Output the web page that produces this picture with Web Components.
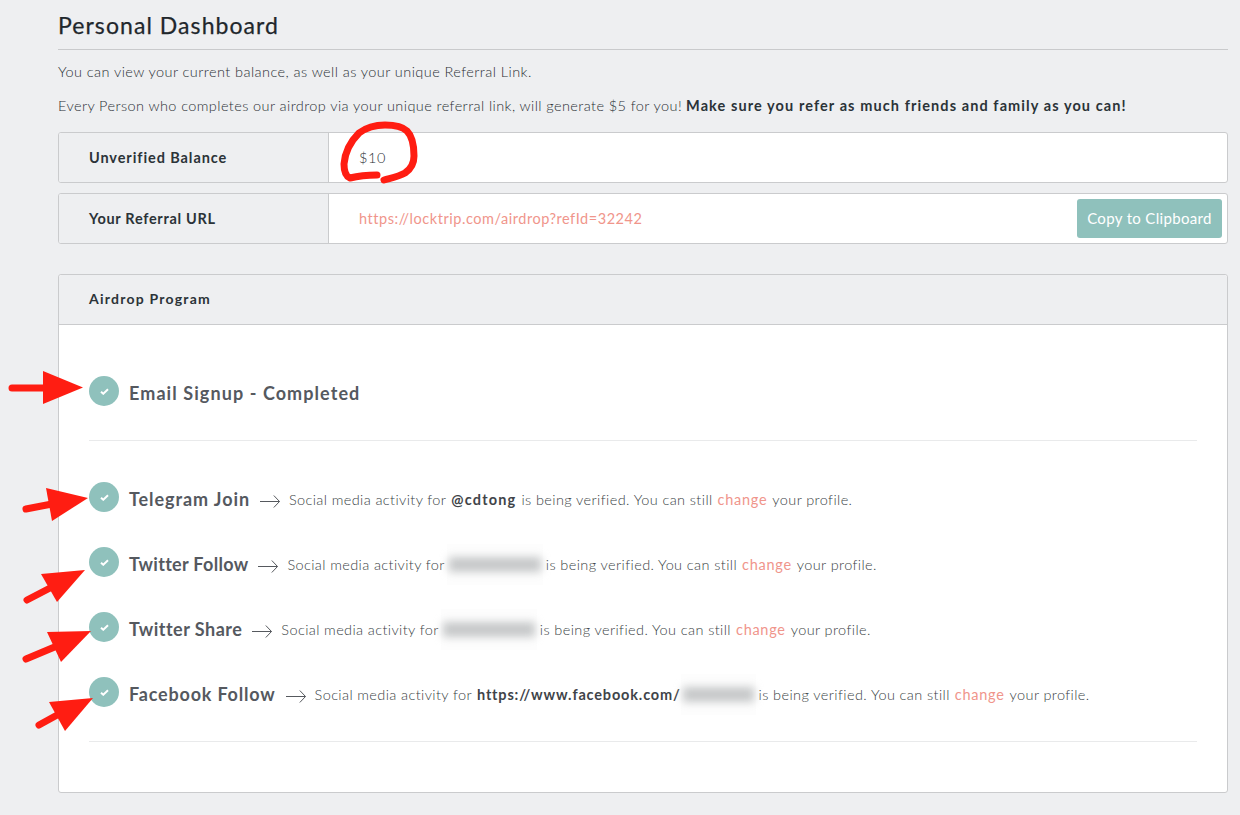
<!doctype html>
<html lang="en"><head><meta charset="utf-8"><title>Personal Dashboard</title>
<style>html,body{margin:0;background:#eeeff1;overflow:hidden}</style></head>
<body>
<dash-page>
  <info-row label="Unverified Balance" label-ls=".915"><span style="font:300 14.5px Lato,sans-serif;letter-spacing:.65px;color:#2b3035">$10</span></info-row>
  <info-row label="Your Referral URL" label-ls=".691" url="https://locktrip.com/airdrop?refId=32242"><copy-button slot="action">Copy to Clipboard</copy-button></info-row>
  <air-panel heading="Airdrop Program">
    <task-row name="Email Signup - Completed" name-ls="1.08"></task-row>
    <hr-line></hr-line>
    <task-row name="Telegram Join" name-ls=".92" handle="@cdtong" handle-ls="1.164"></task-row>
    <task-row name="Twitter Follow" name-ls=".3" blur="96"></task-row>
    <task-row name="Twitter Share" name-ls=".488" blur="96"></task-row>
    <task-row name="Facebook Follow" name-ls=".81" handle="https://www.facebook.com/" handle-ls=".836" blur="75"></task-row>
    <hr-line></hr-line>
  </air-panel>
  <red-marks></red-marks>
</dash-page>
<script>
const el=(html)=>{const t=document.createElement('template');t.innerHTML=html;return t.content.cloneNode(true)};
const esc=s=>String(s||'').replace(/&/g,'&amp;').replace(/</g,'&lt;').replace(/"/g,'&quot;');

class DashPage extends HTMLElement{constructor(){super();this.attachShadow({mode:'open'}).append(el(`
<style>
:host{display:block;position:relative;box-sizing:border-box;width:1240px;height:815px;padding:0 12px 0 58px;font-family:Lato,sans-serif;color:#3f4449}
h1{margin:0;box-sizing:border-box;padding-top:11px;border-bottom:1px solid #c9cacc;height:50px;font:400 23px/28px Lato,sans-serif;letter-spacing:1.07px;color:#1f272c;-webkit-text-stroke:.25px #1f272c}
p{margin:0;font:300 14.5px/20px Lato,sans-serif;color:#2b3035}
.a{margin-top:12px;letter-spacing:.433px}
.b{margin:14px 0 16px;display:flex;gap:4px;letter-spacing:.414px;white-space:nowrap}
.b b{font-weight:700;letter-spacing:1.09px;color:#2b3338}
.rows{display:flex;flex-direction:column;gap:10px}
</style>
<h1>Personal Dashboard</h1>
<p class="a">You can view your current balance, as well as your unique Referral Link.</p>
<p class="b"><span>Every Person who completes our airdrop via your unique referral link, will generate $5 for you!</span><b>Make sure you refer as much friends and family as you can!</b></p>
<div class="rows"><slot></slot></div>`))}}
customElements.define('dash-page',DashPage);

class InfoRow extends HTMLElement{constructor(){super();this.attachShadow({mode:'open'})}
connectedCallback(){const u=this.getAttribute('url');this.shadowRoot.replaceChildren(el(`
<style>
:host{display:flex;box-sizing:border-box;height:51px;background:#fff;border:1px solid #cacbcd;border-radius:3px;overflow:hidden}
.l{flex:none;box-sizing:border-box;width:270px;padding-left:30px;background:#eeeff1;border-right:1px solid #cacbcd;display:flex;align-items:center;font:700 14.5px Lato,sans-serif;letter-spacing:${this.getAttribute('label-ls')}px;color:#2b3338}
.v{flex:1;padding:0 30px;display:flex;align-items:center;font:300 14.5px Lato,sans-serif}
a{color:#f0958b;font-weight:400;letter-spacing:.54px;text-decoration:none}
.act{display:flex;align-items:center;padding-right:5px}
</style>
<div class="l">${esc(this.getAttribute('label'))}</div>
<div class="v">${u?`<a href="#">${esc(u)}</a>`:''}<slot></slot></div>
<div class="act"><slot name="action"></slot></div>`))}}
customElements.define('info-row',InfoRow);

class CopyButton extends HTMLElement{constructor(){super();this.attachShadow({mode:'open'}).append(el(`
<style>:host{display:flex;align-items:center;justify-content:center;box-sizing:border-box;width:145px;height:39px;padding-bottom:2px;border-radius:3px;background:#8fc1bc;color:#fff;font:400 15px Lato,sans-serif;letter-spacing:.333px;white-space:nowrap}</style><slot></slot>`))}}
customElements.define('copy-button',CopyButton);

class AirPanel extends HTMLElement{constructor(){super();this.attachShadow({mode:'open'})}
connectedCallback(){this.shadowRoot.replaceChildren(el(`
<style>
:host{display:block;box-sizing:border-box;margin-top:20px;height:519px;background:#fff;border:1px solid #cacbcd;border-radius:3px}
header{box-sizing:border-box;height:50px;padding:0 0 2px 30px;background:#eeeff1;border-bottom:1px solid #cacbcd;border-radius:3px 3px 0 0;display:flex;align-items:center;font:700 14px Lato,sans-serif;letter-spacing:1.229px;color:#2b3338}
.b{padding:51px 30px 0}
</style>
<header>${esc(this.getAttribute('heading'))}</header>
<div class="b"><slot></slot></div>`))}}
customElements.define('air-panel',AirPanel);

class HrLine extends HTMLElement{constructor(){super();this.attachShadow({mode:'open'}).append(el(`<style>:host{display:block;height:1px;background:#e9eaeb;margin:-1px 0 41px}</style>`))}}
customElements.define('hr-line',HrLine);

class CheckBadge extends HTMLElement{constructor(){super();this.attachShadow({mode:'open'}).append(el(`
<style>:host{display:flex;flex:none;align-items:center;justify-content:center;width:30px;height:30px;border-radius:50%;background:#8fc1bc}svg{display:block}</style>
<svg width="9" height="7" viewBox="0 0 10 8" fill="none" stroke="#fff" stroke-width="2.2"><path d="M1 4.200 3.600 6.600 9 1.400"/></svg>`))}}
customElements.define('check-badge',CheckBadge);

class TaskRow extends HTMLElement{constructor(){super();this.attachShadow({mode:'open'})}
connectedCallback(){const g=k=>this.getAttribute(k);const blur=g('blur');const handle=g('handle');const plain=!blur&&!handle;
this.shadowRoot.replaceChildren(el(`
<style>
:host{display:flex;align-items:flex-start;height:30px;margin-bottom:35px;white-space:nowrap}
.n{margin:2px 0 0 10px;font:700 18px/30px Lato,sans-serif;letter-spacing:${g('name-ls')}px;color:#55595f}
.m{display:flex;align-items:center;gap:5px;margin-top:2px;height:30px;font:300 14.5px Lato,sans-serif;color:#3a3f45}
.s1{letter-spacing:.39px}.s2{letter-spacing:.407px}.s3{letter-spacing:.395px}
.arrow{margin:0 4px 0 10px;position:relative;top:2px}
b{font-weight:700;color:#3f4449;letter-spacing:${g('handle-ls')}px}
a{color:#f0958b;font-weight:400;letter-spacing:.721px;text-decoration:none}
.bl{position:relative;display:block;height:15px;margin:0 -2px 0 ${handle?'-5px':'-3px'}}
.bl:before{content:"";position:absolute;inset:-13px 0;background:#fdfdfd}
.bl i{position:absolute;inset:0 2px;background:#c6c8c9;filter:blur(4px)}
</style>
<check-badge></check-badge>
<span class="n">${esc(g('name'))}</span>
${plain?'':`<div class="m">
<svg class="arrow" width="20" height="14" viewBox="0 0 20 14" fill="none" stroke="#56595e" stroke-width="1"><path d="M0 7.500H19.500M13.800 1.500 19.500 7.500 13.800 13.500"/></svg>
<span class="s1">Social media activity for</span>
${handle?`<b>${esc(handle)}</b>`:''}
${blur?`<span class="bl" style="width:${blur}px"><i></i></span>`:''}
<span class="s2">is being verified. You can still</span>
<a href="#">change</a>
<span class="s3">your profile.</span>
</div>`}`))}}
customElements.define('task-row',TaskRow);

class RedMarks extends HTMLElement{constructor(){super();this.attachShadow({mode:'open'}).append(el(`
<style>:host{position:absolute;left:0;top:0;width:1240px;height:815px;pointer-events:none}svg{display:block}</style>
<svg width="1240" height="815" viewBox="0 0 1240 815">
<g fill="none" stroke="#ff1d12" stroke-linecap="round" stroke-linejoin="round">
<path stroke-width="7" d="M377 175C368 175 358 176 350 178C345 176 344 170 344 164C345 152 351 141 359 133C367 127 376 125 385 125C394 125 402 126 407 131C413 137 414 147 414 156C414 163 411 169 405 173C398 177 391 178 384 180"/>
<path stroke-width="7" d="M12 388H46M26 509 52 504M27 600 52 587M26 659 57 646M39 725 59 714"/>
</g>
<g fill="#ff1d12">
<path d="M43 371 83 387.500 43 404Z"/><path d="M46 488 88 498 52 521Z"/><path d="M41 574 85 570 57 602Z"/><path d="M47 632 91 631 61 662Z"/><path d="M49 702 93 698 65 731Z"/>
</g></svg>`))}}
customElements.define('red-marks',RedMarks);
</script>
</body></html>
